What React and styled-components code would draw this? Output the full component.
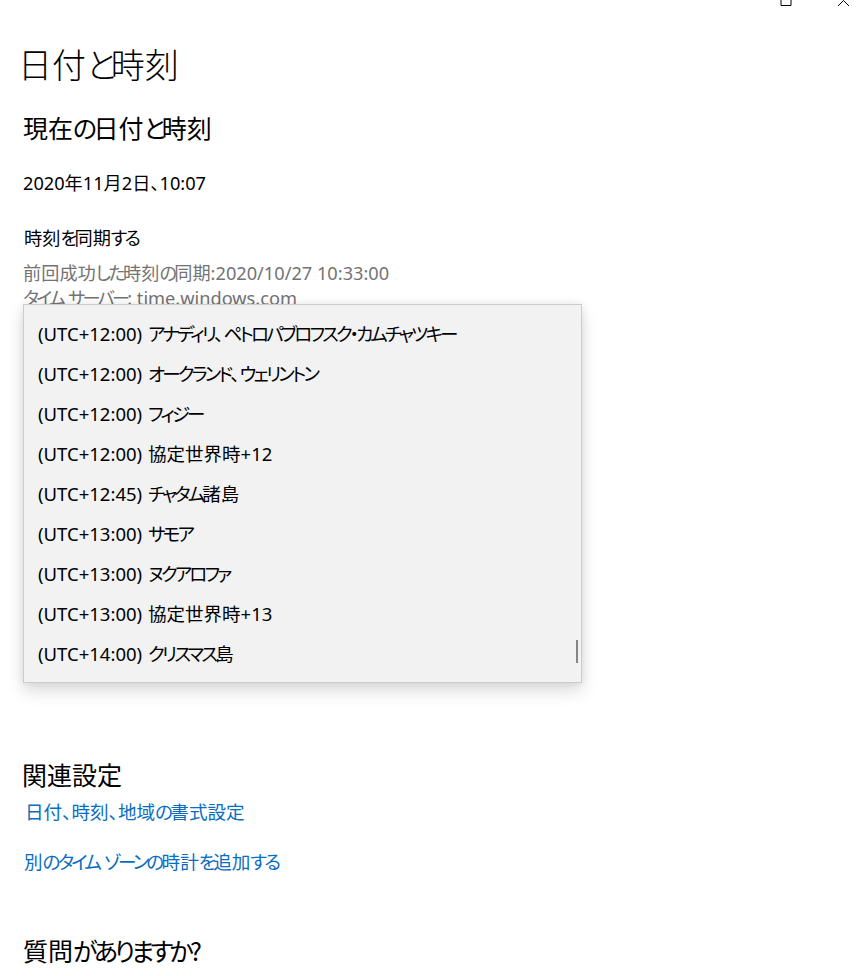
import React from "react";
import styled, { createGlobalStyle } from "styled-components";

const Global = createGlobalStyle`
  html, body { margin: 0; padding: 0; background: #ffffff; }
  body {
    font-family: "Noto Sans", "Noto Sans CJK JP", sans-serif;
    font-feature-settings: "palt" 1;
    color: #000000;
    -webkit-font-smoothing: antialiased;
  }
`;

const Kana = styled.span`
  letter-spacing: -0.15em;
`;

function J({ children }) {
  const parts = String(children).split(/([\u3041-\u309f\u30a0-\u30ff]+)/);
  return parts.map((p, i) => (i % 2 === 1 ? <Kana key={i}>{p}</Kana> : p));
}

const Page = styled.div`
  width: 863px;
  height: 976px;
  overflow: hidden;
  position: relative;
  background: #fff;
`;

const TitleBar = styled.div`
  height: 8px;
  display: flex;
  justify-content: flex-end;
  align-items: flex-start;
  gap: 46px;
  padding-right: 13px;
  overflow: hidden;
`;

const Content = styled.div`
  padding: 34px 0 0 23px;
  display: flex;
  flex-direction: column;
  position: relative;
`;

const PageTitle = styled.h1`
  margin: 0 0 0 -5px;
  font-family: "Noto Sans CJK JP", sans-serif;
  font-weight: 300;
  font-size: 34px;
  line-height: 44px;
`;

const SectionTitle = styled.h2`
  margin: ${(p) => p.$mt || 0}px 0 0 ${(p) => p.$ml || 0}px;
  font-family: "Noto Sans CJK JP", sans-serif;
  font-weight: 400;
  font-size: 25px;
  line-height: 32px;
`;

const Text = styled.div`
  margin-top: ${(p) => p.$mt || 0}px;
  margin-left: ${(p) => p.$ml || 0}px;
  font-size: 18.2px;
  line-height: ${(p) => (p.$muted ? 25 : 24)}px;
  color: ${(p) => (p.$muted ? "#737373" : "#000")};
`;

const Link = styled.a`
  display: block;
  margin-top: ${(p) => p.$mt || 0}px;
  margin-left: ${(p) => p.$ml || 0}px;
  font-size: 18.6px;
  line-height: 24px;
  color: #0a6dc2;
  text-decoration: none;
`;

const HiddenArea = styled.div`
  height: 447px;
`;

const Dropdown = styled.div`
  position: absolute;
  left: 23px;
  top: 304px;
  width: 557px;
  padding: 8px 0 9px;
  background: #f2f2f2;
  border: 1px solid #cccccc;
  box-shadow: 0 8px 16px rgba(0, 0, 0, 0.14), 0 0 8px rgba(0, 0, 0, 0.08);
  display: flex;
  flex-direction: column;
`;

const Item = styled.div`
  height: 40px;
  display: flex;
  align-items: center;
  gap: 6px;
  padding-left: 14px;
  font-size: 18.5px;
  color: #000;
  white-space: nowrap;
`;

const Offset = styled.span``;
const ZoneName = styled.span``;

const ScrollThumb = styled.div`
  position: absolute;
  right: 3px;
  top: 335px;
  width: 2px;
  height: 23px;
  background: #858585;
`;

const zones = [
  ["(UTC+12:00)", "アナディリ、ペトロパブロフスク・カムチャツキー"],
  ["(UTC+12:00)", "オークランド、ウェリントン"],
  ["(UTC+12:00)", "フィジー"],
  ["(UTC+12:00)", "協定世界時+12"],
  ["(UTC+12:45)", "チャタム諸島"],
  ["(UTC+13:00)", "サモア"],
  ["(UTC+13:00)", "ヌクアロファ"],
  ["(UTC+13:00)", "協定世界時+13"],
  ["(UTC+14:00)", "クリスマス島"],
];

export default function App() {
  return (
    <Page>
      <Global />
      <TitleBar>
        <svg width="12" height="8" viewBox="0 0 12 8">
          <path d="M1 -6 V5.5 H11 V-6" fill="none" stroke="#000" strokeWidth="1" />
        </svg>
        <svg width="12" height="8" viewBox="0 0 12 8">
          <path d="M0 6 L5.5 0.5 L11 6" fill="none" stroke="#000" strokeWidth="1" />
        </svg>
      </TitleBar>
      <Content>
        <PageTitle><J>日付と時刻</J></PageTitle>
        <SectionTitle $mt={25}><J>現在の日付と時刻</J></SectionTitle>
        <Text $mt={28}>2020年11月2日、10:07</Text>
        <Text $mt={31} $ml={1}><J>時刻を同期する</J></Text>
        <Text $mt={11} $muted><J>前回成功した時刻の同期:2020/10/27 10:33:00</J></Text>
        <Text $muted><J>タイム</J>&nbsp;<J>サーバー: time.windows.com</J></Text>
        <HiddenArea />
        <SectionTitle $ml={-1}>関連設定</SectionTitle>
        <Link $mt={10} $ml={2}><J>日付、時刻、地域の書式設定</J></Link>
        <Link $mt={26} $ml={1}><J>別のタイム</J>&nbsp;<J>ゾーンの時計を追加する</J></Link>
        <SectionTitle $mt={60}><J>質問がありますか?</J></SectionTitle>
      </Content>
      <Dropdown>
        {zones.map(([offset, name]) => (
          <Item key={offset + name}>
            <Offset>{offset}</Offset>
            <ZoneName><J>{name}</J></ZoneName>
          </Item>
        ))}
        <ScrollThumb />
      </Dropdown>
    </Page>
  );
}
